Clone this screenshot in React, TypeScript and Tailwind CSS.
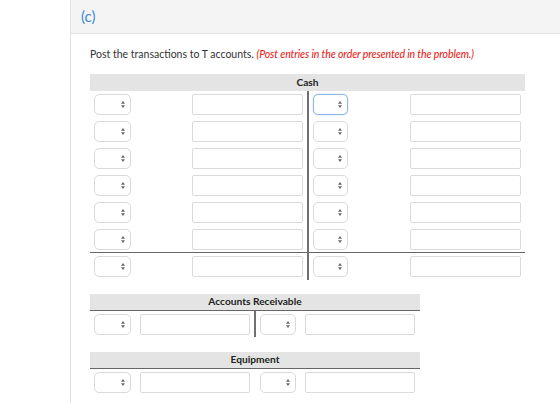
import React from "react";

const Arrows = () => (
  <svg width="4" height="7" viewBox="0 0 4 7" className="block">
    <path d="M2 0 L4 2.7 L0 2.7 Z" fill="#666" />
    <path d="M2 7 L4 4.3 L0 4.3 Z" fill="#666" />
  </svg>
);

const Sel = ({ w, focus }: { w: string; focus?: boolean }) => (
  <div
    className={`${w} h-[21px] shrink-0 rounded-[5px] border bg-white flex items-center justify-end pr-[5px] ${
      focus ? "border-[#8fb6ea] shadow-[0_0_2px_#b9d3f5]" : "border-[#dadada]"
    }`}
  >
    <Arrows />
  </div>
);

const Inp = ({ w }: { w: string }) => (
  <div className={`${w} h-[21px] shrink-0 rounded-[2px] border border-[#dadada] bg-white`} />
);

const CashRow = ({ focus }: { focus?: boolean }) => (
  <div className="flex h-[21px]">
    <div className="w-[217px] flex pl-[4px] pr-[4px] justify-between">
      <Sel w="w-[37px]" />
      <Inp w="w-[111px]" />
    </div>
    <div className="w-[2px]" />
    <div className="flex-1 flex pl-[4px] pr-[4px] justify-between">
      <Sel w="w-[35px]" focus={focus} />
      <Inp w="w-[111px]" />
    </div>
  </div>
);

const SmallRow = ({ line }: { line: boolean }) => (
  <div className="flex">
    <div className="w-[164px] flex items-start pl-[4px] pt-[3px] pb-[2px] gap-[9px]">
      <Sel w="w-[37px]" />
      <Inp w="w-[110px]" />
    </div>
    <div className={`w-[2px] ${line ? "bg-[#707070]" : ""}`} />
    <div className="flex-1 flex items-start pl-[4px] pt-[3px] pb-[2px] gap-[9px]">
      <Sel w="w-[36px]" />
      <Inp w="w-[110px]" />
    </div>
  </div>
);

export default function App() {
  return (
    <div
      className="w-[560px] h-[403px] bg-white flex overflow-hidden text-[#333]"
      style={{ fontFamily: "Lato, 'Open Sans', sans-serif" }}
    >
      <div className="w-[71px] shrink-0 border-r border-[#e2e2e2]" />
      <div className="flex-1 flex flex-col">
        <div className="h-[34px] bg-[#f4f4f4] border-b border-[#e3e3e3] flex items-center pl-[10px]">
          <span className="text-[15px] leading-none text-[#3d8bd8]">(c)</span>
        </div>
        <div className="pl-[19px] pt-[12px]">
          <p className="text-[10.5px] leading-[16px]">
            Post the transactions to T accounts.{" "}
            <span className="italic font-medium tracking-[-0.1px] text-[#e8281e]">
              (Post entries in the order presented in the problem.)
            </span>
          </p>

          <div className="w-[435px] mt-[12px]">
            <div className="h-[17px] bg-[#e4e4e4] flex items-center justify-center text-[10.2px] font-bold text-[#222]">
              Cash
            </div>
            <div className="relative">
              <div className="absolute left-[217px] top-0 bottom-0 w-[2px] bg-[#707070]" />
              <div className="flex flex-col gap-[6px] pt-[3px] pb-[2px]">
                <CashRow focus />
                <CashRow />
                <CashRow />
                <CashRow />
                <CashRow />
                <CashRow />
              </div>
              <div className="h-[1px] bg-[#666]" />
              <div className="pt-[3px] pb-[3px]">
                <CashRow />
              </div>
            </div>
          </div>

          <div className="w-[330px] mt-[14px]">
            <div className="h-[17px] bg-[#e4e4e4] border-b border-[#666] flex items-center justify-center text-[10.2px] font-bold text-[#222]">
              Accounts Receivable
            </div>
            <SmallRow line />
          </div>

          <div className="w-[330px] mt-[15px]">
            <div className="h-[17px] bg-[#e4e4e4] border-b border-[#666] flex items-center justify-center text-[10.2px] font-bold text-[#222]">
              Equipment
            </div>
            <SmallRow line={false} />
          </div>
        </div>
      </div>
    </div>
  );
}
